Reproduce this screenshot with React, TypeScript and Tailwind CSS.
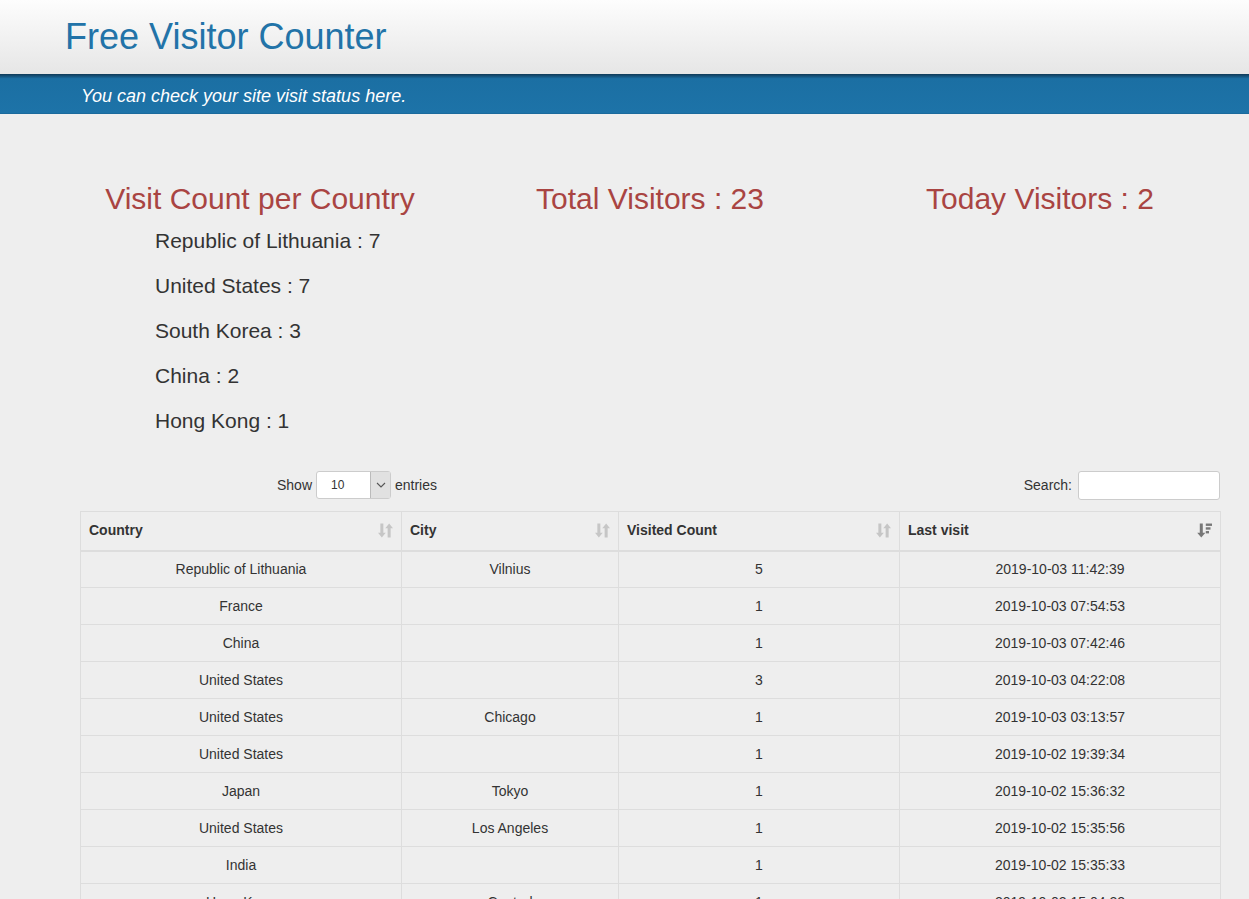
import React from "react"

const countries = [
  { name: "Republic of Lithuania", count: 7 },
  { name: "United States", count: 7 },
  { name: "South Korea", count: 3 },
  { name: "China", count: 2 },
  { name: "Hong Kong", count: 1 },
]

const rows = [
  ["Republic of Lithuania", "Vilnius", "5", "2019-10-03 11:42:39"],
  ["France", "", "1", "2019-10-03 07:54:53"],
  ["China", "", "1", "2019-10-03 07:42:46"],
  ["United States", "", "3", "2019-10-03 04:22:08"],
  ["United States", "Chicago", "1", "2019-10-03 03:13:57"],
  ["United States", "", "1", "2019-10-02 19:39:34"],
  ["Japan", "Tokyo", "1", "2019-10-02 15:36:32"],
  ["United States", "Los Angeles", "1", "2019-10-02 15:35:56"],
  ["India", "", "1", "2019-10-02 15:35:33"],
  ["Hong Kong", "Central", "1", "2019-10-02 15:04:22"],
]

const cols = [
  { name: "Country", w: "w-[321px]", sorted: false },
  { name: "City", w: "w-[217px]", sorted: false },
  { name: "Visited Count", w: "w-[281px]", sorted: false },
  { name: "Last visit", w: "w-[321px]", sorted: true },
]

function SortIcon({ sorted }: { sorted: boolean }) {
  if (sorted) {
    return (
      <svg width="15" height="15" viewBox="0 0 14 14" className="text-[#777]">
        <path d="M2.6 0.5h2.8v8.5h2.4L4 13.5 0.2 9h2.4z" fill="currentColor" />
        <rect x="8.2" y="0.5" width="5.8" height="2.2" fill="currentColor" />
        <rect x="8.2" y="4" width="4.4" height="2.2" fill="currentColor" />
        <rect x="8.2" y="7.5" width="3" height="2.2" fill="currentColor" />
      </svg>
    )
  }
  return (
    <svg width="15" height="15" viewBox="0 0 14 14" className="text-[#c6c6c6]">
      <path d="M2.2 0.5h2.8v8.5h2.2L3.6 13.5 0 9h2.2z" fill="currentColor" />
      <path d="M9 13.5h2.8V5H14L10.4 0.5 6.8 5H9z" fill="currentColor" />
    </svg>
  )
}

export default function App() {
  return (
    <div className="min-h-[899px] bg-[#eeeeee] font-['Liberation_Sans',Arial,sans-serif] text-[#333]">
      <div className="h-[74px] bg-gradient-to-b from-[#fdfdfd] to-[#e6e6e6]">
        <div className="ml-[65px] w-[1170px]">
          <h1 className="pt-[15px] text-[36px] leading-[44px] text-[#2273a8]">Free Visitor Counter</h1>
        </div>
      </div>
      <div className="h-[40px] bg-gradient-to-b from-[#0f3a58] via-[#1b6fa3] via-[12%] to-[#1d73a8] border-b border-[#1a6a9c]">
        <div className="ml-[65px] w-[1170px] px-[16px]">
          <p className="pt-[11px] text-[18px] italic leading-[22px] text-white">You can check your site visit status here.</p>
        </div>
      </div>

      <div className="ml-[65px] w-[1170px]">
        <div className="grid grid-cols-3 pt-[68px]">
          <div className="flex flex-col">
            <h2 className="text-center text-[30px] leading-[33px] text-[#a94442]">Visit Count per Country</h2>
            <ul className="mt-[3px] pl-[90px]">
              {countries.map(c => (
                <li key={c.name} className="h-[45px] text-[21px] leading-[45px]">{c.name} : {c.count}</li>
              ))}
            </ul>
          </div>
          <div>
            <h2 className="text-center text-[30px] leading-[33px] text-[#a94442]">Total Visitors : 23</h2>
          </div>
          <div>
            <h2 className="text-center text-[30px] leading-[33px] text-[#a94442]">Today Visitors : 2</h2>
          </div>
        </div>

        <div className="px-[15px] pt-[27px]">
          <div className="flex h-[30px] items-center">
            <div className="flex w-1/2 items-center justify-center pr-[16px] text-[14px]">
              <span>Show</span>
              <div className="mx-[4px] flex h-[28px] w-[75px] items-center rounded-[3px] border border-[#ccc] bg-white">
                <span className="flex-1 pl-[14px] text-[12px]">10</span>
                <span className="flex h-full w-[20px] items-center justify-center border-l border-[#bbb] bg-[#e1e1e1]">
                  <svg width="10" height="6" viewBox="0 0 10 6"><path d="M1 1l4 4 4-4" stroke="#555" strokeWidth="1.1" fill="none" /></svg>
                </span>
              </div>
              <span>entries</span>
            </div>
            <div className="flex w-1/2 items-center justify-end text-[14px]">
              <span>Search:</span>
              <div className="ml-[6px] h-[29px] w-[142px] rounded-[3px] border border-[#ccc] bg-white" />
            </div>
          </div>

          <table className="mt-[11px] w-[1140px] table-fixed border-collapse text-[14px]">
            <thead>
              <tr className="h-[39px] border-b-2 border-[#ddd]">
                {cols.map(c => (
                  <th key={c.name} className={`${c.w} border-x border-t border-[#ddd] px-[8px] text-left font-bold`}>
                    <div className="flex items-center justify-between">
                      <span>{c.name}</span>
                      <SortIcon sorted={c.sorted} />
                    </div>
                  </th>
                ))}
              </tr>
            </thead>
            <tbody>
              {rows.map((r, i) => (
                <tr key={i} className="h-[37px]">
                  {r.map((cell, j) => (
                    <td key={j} className="border border-[#ddd] px-[8px] text-center">{cell}</td>
                  ))}
                </tr>
              ))}
            </tbody>
          </table>
        </div>
      </div>
    </div>
  )
}
